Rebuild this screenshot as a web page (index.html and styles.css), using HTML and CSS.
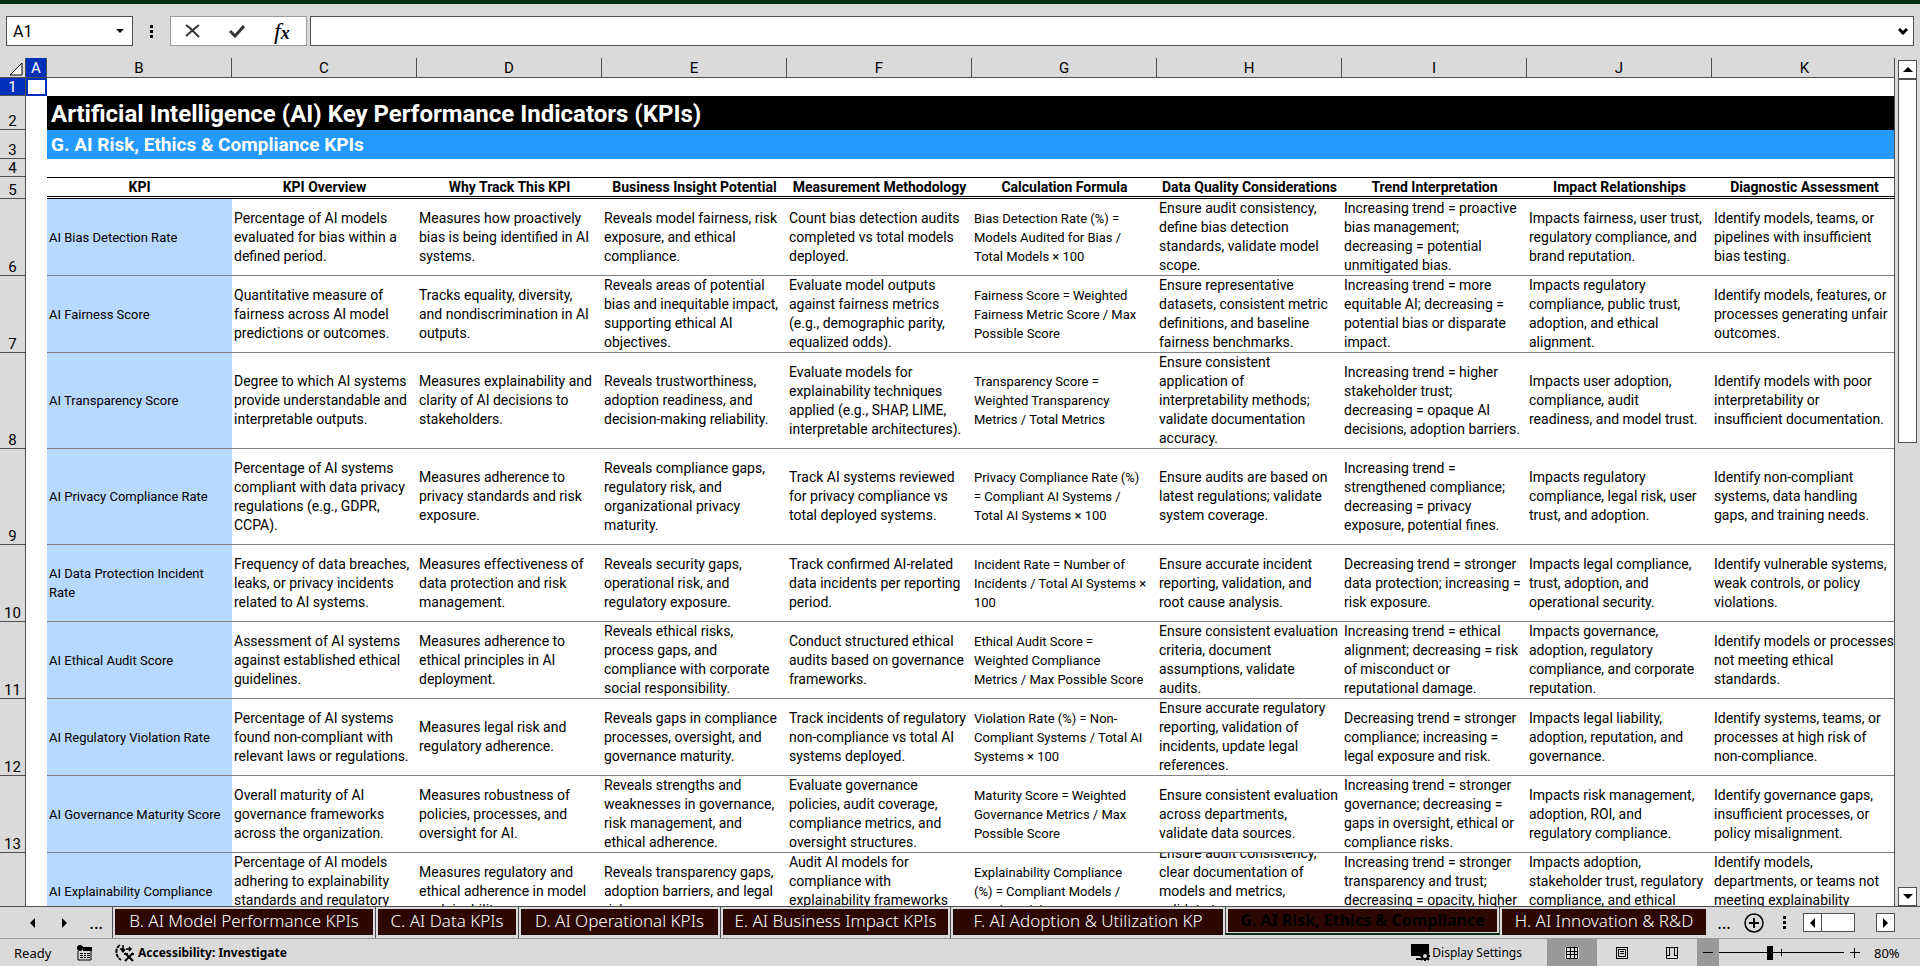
FILE: index.html
```html
<!DOCTYPE html>
<html lang="en">
<head>
    <meta charset="UTF-8">
    <meta name="viewport" content="width=device-width, initial-scale=1.0">
    <title>AI KPIs - Excel</title>
    <link rel="stylesheet" href="styles.css">
</head>
<body>

<header class="formula-bar">
    <div class="name-box">
        <input type="text" value="A1" aria-label="Name box">
        <button type="button" aria-label="Open name list">
            <svg width="8" height="4" viewBox="0 0 8 4"><path d="M0 0h8L4 4z"/></svg>
        </button>
    </div>
    <svg class="grip" width="3" height="13" viewBox="0 0 3 13"><path d="M0 0h3v3H0zM0 5h3v3H0zM0 10h3v3H0z"/></svg>
    <div class="formula-buttons">
        <button type="button" aria-label="Cancel">
            <svg width="16" height="14" viewBox="0 0 16 14" fill="none" stroke="#333" stroke-width="2"><path d="M1 1l4 3 9 9M14 1L9 5 1 12"/></svg>
        </button>
        <button type="button" aria-label="Enter">
            <svg width="16" height="13" viewBox="0 0 16 13" fill="none" stroke="#333" stroke-width="3"><path d="M1 6l5 5 9-10"/></svg>
        </button>
        <button type="button" class="fx" aria-label="Insert function"><i>f</i><i class="x">x</i></button>
    </div>
    <div class="formula-input">
        <input type="text" aria-label="Formula">
        <button type="button" aria-label="Expand formula bar">
            <svg width="10" height="7" viewBox="0 0 10 7" fill="none" stroke="#000" stroke-width="3"><path d="M1 1l4 4 4-4"/></svg>
        </button>
    </div>
</header>

<main class="workspace">
    <div class="sheet">
        <table class="grid">
            <colgroup>
                <col class="col-num"><col class="col-a"><col><col><col><col><col><col><col><col><col><col>
            </colgroup>
            <thead>
                <tr>
                    <th class="corner"><svg width="14" height="14" viewBox="0 0 14 14"><path d="M13 1v12H1z" fill="#fff" stroke="#000"/></svg></th>
                    <th class="selected">A</th>
                    <th>B</th><th>C</th><th>D</th><th>E</th><th>F</th><th>G</th><th>H</th><th>I</th><th>J</th><th>K</th>
                </tr>
            </thead>
            <tbody>
                <tr class="short">
                    <th class="selected">1</th>
                    <td class="active-cell"></td>
                    <td colspan="10"></td>
                </tr>
                <tr class="title-row">
                    <th>2</th>
                    <td></td>
                    <td colspan="10" class="title">Artificial Intelligence (AI) Key Performance Indicators (KPIs)</td>
                </tr>
                <tr class="subtitle-row">
                    <th>3</th>
                    <td></td>
                    <td colspan="10" class="subtitle">G. AI Risk, Ethics &amp; Compliance KPIs</td>
                </tr>
                <tr class="short">
                    <th>4</th>
                    <td></td>
                    <td colspan="10"></td>
                </tr>
                <tr class="heading-row">
                    <th>5</th>
                    <td></td>
                    <td>KPI</td>
                    <td>KPI Overview</td>
                    <td>Why Track This KPI</td>
                    <td>Business Insight Potential</td>
                    <td>Measurement Methodology</td>
                    <td>Calculation Formula</td>
                    <td>Data Quality Considerations</td>
                    <td>Trend Interpretation</td>
                    <td>Impact Relationships</td>
                    <td>Diagnostic Assessment</td>
                </tr>
                <tr class="kpi">
                    <th>6</th>
                    <td></td>
                    <td>AI Bias Detection Rate</td>
                    <td>Percentage of AI models<br>evaluated for bias within a<br>defined period.</td>
                    <td>Measures how proactively<br>bias is being identified in AI<br>systems.</td>
                    <td>Reveals model fairness, risk<br>exposure, and ethical<br>compliance.</td>
                    <td>Count bias detection audits<br>completed vs total models<br>deployed.</td>
                    <td>Bias Detection Rate (%) =<br>Models Audited for Bias /<br>Total Models × 100</td>
                    <td>Ensure audit consistency,<br>define bias detection<br>standards, validate model<br>scope.</td>
                    <td>Increasing trend = proactive<br>bias management;<br>decreasing = potential<br>unmitigated bias.</td>
                    <td>Impacts fairness, user trust,<br>regulatory compliance, and<br>brand reputation.</td>
                    <td>Identify models, teams, or<br>pipelines with insufficient<br>bias testing.</td>
                </tr>
                <tr class="kpi">
                    <th>7</th>
                    <td></td>
                    <td>AI Fairness Score</td>
                    <td>Quantitative measure of<br>fairness across AI model<br>predictions or outcomes.</td>
                    <td>Tracks equality, diversity,<br>and nondiscrimination in AI<br>outputs.</td>
                    <td>Reveals areas of potential<br>bias and inequitable impact,<br>supporting ethical AI<br>objectives.</td>
                    <td>Evaluate model outputs<br>against fairness metrics<br>(e.g., demographic parity,<br>equalized odds).</td>
                    <td>Fairness Score = Weighted<br>Fairness Metric Score / Max<br>Possible Score</td>
                    <td>Ensure representative<br>datasets, consistent metric<br>definitions, and baseline<br>fairness benchmarks.</td>
                    <td>Increasing trend = more<br>equitable AI; decreasing =<br>potential bias or disparate<br>impact.</td>
                    <td>Impacts regulatory<br>compliance, public trust,<br>adoption, and ethical<br>alignment.</td>
                    <td>Identify models, features, or<br>processes generating unfair<br>outcomes.</td>
                </tr>
                <tr class="kpi tall">
                    <th>8</th>
                    <td></td>
                    <td>AI Transparency Score</td>
                    <td>Degree to which AI systems<br>provide understandable and<br>interpretable outputs.</td>
                    <td>Measures explainability and<br>clarity of AI decisions to<br>stakeholders.</td>
                    <td>Reveals trustworthiness,<br>adoption readiness, and<br>decision-making reliability.</td>
                    <td>Evaluate models for<br>explainability techniques<br>applied (e.g., SHAP, LIME,<br>interpretable architectures).</td>
                    <td>Transparency Score =<br>Weighted Transparency<br>Metrics / Total Metrics</td>
                    <td>Ensure consistent<br>application of<br>interpretability methods;<br>validate documentation<br>accuracy.</td>
                    <td>Increasing trend = higher<br>stakeholder trust;<br>decreasing = opaque AI<br>decisions, adoption barriers.</td>
                    <td>Impacts user adoption,<br>compliance, audit<br>readiness, and model trust.</td>
                    <td>Identify models with poor<br>interpretability or<br>insufficient documentation.</td>
                </tr>
                <tr class="kpi tall">
                    <th>9</th>
                    <td></td>
                    <td>AI Privacy Compliance Rate</td>
                    <td>Percentage of AI systems<br>compliant with data privacy<br>regulations (e.g., GDPR,<br>CCPA).</td>
                    <td>Measures adherence to<br>privacy standards and risk<br>exposure.</td>
                    <td>Reveals compliance gaps,<br>regulatory risk, and<br>organizational privacy<br>maturity.</td>
                    <td>Track AI systems reviewed<br>for privacy compliance vs<br>total deployed systems.</td>
                    <td>Privacy Compliance Rate (%)<br>= Compliant AI Systems /<br>Total AI Systems × 100</td>
                    <td>Ensure audits are based on<br>latest regulations; validate<br>system coverage.</td>
                    <td>Increasing trend =<br>strengthened compliance;<br>decreasing = privacy<br>exposure, potential fines.</td>
                    <td>Impacts regulatory<br>compliance, legal risk, user<br>trust, and adoption.</td>
                    <td>Identify non-compliant<br>systems, data handling<br>gaps, and training needs.</td>
                </tr>
                <tr class="kpi">
                    <th>10</th>
                    <td></td>
                    <td>AI Data Protection Incident<br>Rate</td>
                    <td>Frequency of data breaches,<br>leaks, or privacy incidents<br>related to AI systems.</td>
                    <td>Measures effectiveness of<br>data protection and risk<br>management.</td>
                    <td>Reveals security gaps,<br>operational risk, and<br>regulatory exposure.</td>
                    <td>Track confirmed AI-related<br>data incidents per reporting<br>period.</td>
                    <td>Incident Rate = Number of<br>Incidents / Total AI Systems ×<br>100</td>
                    <td>Ensure accurate incident<br>reporting, validation, and<br>root cause analysis.</td>
                    <td>Decreasing trend = stronger<br>data protection; increasing =<br>risk exposure.</td>
                    <td>Impacts legal compliance,<br>trust, adoption, and<br>operational security.</td>
                    <td>Identify vulnerable systems,<br>weak controls, or policy<br>violations.</td>
                </tr>
                <tr class="kpi">
                    <th>11</th>
                    <td></td>
                    <td>AI Ethical Audit Score</td>
                    <td>Assessment of AI systems<br>against established ethical<br>guidelines.</td>
                    <td>Measures adherence to<br>ethical principles in AI<br>deployment.</td>
                    <td>Reveals ethical risks,<br>process gaps, and<br>compliance with corporate<br>social responsibility.</td>
                    <td>Conduct structured ethical<br>audits based on governance<br>frameworks.</td>
                    <td>Ethical Audit Score =<br>Weighted Compliance<br>Metrics / Max Possible Score</td>
                    <td>Ensure consistent evaluation<br>criteria, document<br>assumptions, validate<br>audits.</td>
                    <td>Increasing trend = ethical<br>alignment; decreasing = risk<br>of misconduct or<br>reputational damage.</td>
                    <td>Impacts governance,<br>adoption, regulatory<br>compliance, and corporate<br>reputation.</td>
                    <td>Identify models or processes<br>not meeting ethical<br>standards.</td>
                </tr>
                <tr class="kpi">
                    <th>12</th>
                    <td></td>
                    <td>AI Regulatory Violation Rate</td>
                    <td>Percentage of AI systems<br>found non-compliant with<br>relevant laws or regulations.</td>
                    <td>Measures legal risk and<br>regulatory adherence.</td>
                    <td>Reveals gaps in compliance<br>processes, oversight, and<br>governance maturity.</td>
                    <td>Track incidents of regulatory<br>non-compliance vs total AI<br>systems deployed.</td>
                    <td>Violation Rate (%) = Non-<br>Compliant Systems / Total AI<br>Systems × 100</td>
                    <td>Ensure accurate regulatory<br>reporting, validation of<br>incidents, update legal<br>references.</td>
                    <td>Decreasing trend = stronger<br>compliance; increasing =<br>legal exposure and risk.</td>
                    <td>Impacts legal liability,<br>adoption, reputation, and<br>governance.</td>
                    <td>Identify systems, teams, or<br>processes at high risk of<br>non-compliance.</td>
                </tr>
                <tr class="kpi">
                    <th>13</th>
                    <td></td>
                    <td>AI Governance Maturity Score</td>
                    <td>Overall maturity of AI<br>governance frameworks<br>across the organization.</td>
                    <td>Measures robustness of<br>policies, processes, and<br>oversight for AI.</td>
                    <td>Reveals strengths and<br>weaknesses in governance,<br>risk management, and<br>ethical adherence.</td>
                    <td>Evaluate governance<br>policies, audit coverage,<br>compliance metrics, and<br>oversight structures.</td>
                    <td>Maturity Score = Weighted<br>Governance Metrics / Max<br>Possible Score</td>
                    <td>Ensure consistent evaluation<br>across departments,<br>validate data sources.</td>
                    <td>Increasing trend = stronger<br>governance; decreasing =<br>gaps in oversight, ethical or<br>compliance risks.</td>
                    <td>Impacts risk management,<br>adoption, ROI, and<br>regulatory compliance.</td>
                    <td>Identify governance gaps,<br>insufficient processes, or<br>policy misalignment.</td>
                </tr>
                <tr class="kpi">
                    <th></th>
                    <td></td>
                    <td>AI Explainability Compliance</td>
                    <td>Percentage of AI models<br>adhering to explainability<br>standards and regulatory<br>guidelines.</td>
                    <td>Measures regulatory and<br>ethical adherence in model<br>explainability.</td>
                    <td>Reveals transparency gaps,<br>adoption barriers, and legal<br>risks.</td>
                    <td>Audit AI models for<br>compliance with<br>explainability frameworks<br>and rules.</td>
                    <td>Explainability Compliance<br>(%) = Compliant Models /<br>Total Models × 100</td>
                    <td><div class="clip">Ensure audit consistency,<br>clear documentation of<br>models and metrics,<br>validate transparency<br>tools.</div></td>
                    <td>Increasing trend = stronger<br>transparency and trust;<br>decreasing = opacity, higher<br>risk.</td>
                    <td>Impacts adoption,<br>stakeholder trust, regulatory<br>compliance, and ethical<br>standards.</td>
                    <td>Identify models,<br>departments, or teams not<br>meeting explainability<br>standards.</td>
                </tr>
            </tbody>
        </table>
    </div>
    <div class="v-scroll">
        <button type="button" aria-label="Scroll up"><svg width="10" height="5" viewBox="0 0 10 5"><path d="M5 0l5 5H0z"/></svg></button>
        <div class="v-thumb"></div>
        <button type="button" class="down" aria-label="Scroll down"><svg width="10" height="5" viewBox="0 0 10 5"><path d="M0 0h10L5 5z"/></svg></button>
    </div>
</main>

<nav class="tabs">
    <div class="tab-nav">
        <button type="button" aria-label="Previous sheet"><svg width="5" height="10" viewBox="0 0 5 10"><path d="M5 0v10L0 5z"/></svg></button>
        <button type="button" aria-label="Next sheet"><svg width="5" height="10" viewBox="0 0 5 10"><path d="M0 0v10l5-5z"/></svg></button>
        <button type="button" class="dots" aria-label="More sheets">...</button>
    </div>
    <div class="tab w-b"><a href="#">B. AI Model Performance KPIs</a></div>
    <div class="tab w-c"><a href="#">C. AI Data KPIs</a></div>
    <div class="tab w-d"><a href="#">D. AI Operational KPIs</a></div>
    <div class="tab w-e"><a href="#">E. AI Business Impact KPIs</a></div>
    <div class="tab w-f"><a href="#">F. AI Adoption &amp; Utilization KP</a></div>
    <div class="tab current w-g"><a href="#">G. AI Risk, Ethics &amp; Compliance</a></div>
    <div class="tab last w-h"><a href="#">H. AI Innovation &amp; R&amp;D</a></div>
    <button type="button" class="dots" aria-label="More sheets">...</button>
    <button type="button" class="add" aria-label="New sheet">
        <svg width="20" height="20" viewBox="0 0 20 20" fill="none" stroke="#000"><circle cx="10" cy="10" r="9" stroke-width="1.5"/><path d="M5 10h10M10 5v10" stroke-width="2"/></svg>
    </button>
    <svg class="tab-grip" width="3" height="13" viewBox="0 0 3 13"><path d="M0 0h3v3H0zM0 5h3v3H0zM0 10h3v3H0z"/></svg>
    <div class="h-scroll">
        <button type="button" aria-label="Scroll left"><svg width="5" height="10" viewBox="0 0 5 10"><path d="M5 0v10L0 5z"/></svg></button>
        <div class="h-thumb"></div>
        <button type="button" class="right" aria-label="Scroll right"><svg width="5" height="10" viewBox="0 0 5 10"><path d="M0 0v10l5-5z"/></svg></button>
    </div>
</nav>

<footer class="status">
    <span class="ready">Ready</span>
    <svg class="macro" width="16" height="16" viewBox="0 0 16 16"><path d="M1 6v9h13V3H7" fill="none" stroke="#000"/><circle cx="3" cy="3" r="3"/><path d="M6 2h9v4H6zM3 8h3v1H3zM7 8h2v1H7zM10 8h3v1h-3zM3 10h3v1H3zM7 10h2v1H7zM10 10h3v1h-3zM3 12h3v1H3zM7 12h2v1H7zM10 12h3v1h-3z"/></svg>
    <button type="button" class="access">
        <svg width="20" height="18" viewBox="0 0 20 18" fill="none" stroke="#000"><path d="M5 1C0 4 0 12 6 16" stroke-width="2" stroke-dasharray="4 1"/><path d="M5 5h4M8 1v6M6 5l2 3 2-3M11 5h5M14 3l2 2-2 2" stroke-width="1.5"/><path d="M10 9l8 8M18 9l-8 8M9 10h4M16 10h3" stroke-width="2"/></svg>
        Accessibility: Investigate
    </button>
    <button type="button" class="display">
        <svg width="20" height="19" viewBox="0 0 20 19"><path d="M0 1h18v8h-3l-2 1-3 3H0zM5 15h5v2H5z"/><circle cx="14" cy="13" r="3" fill="#dadada" stroke="#000" stroke-width="2"/><path d="M14 8v2M14 16v2M9 13h2M17 13h2M10 9l2 2M18 9l-2 2M10 17l2-2M18 17l-2-2" stroke="#000" stroke-width="2"/></svg>
        Display Settings
    </button>
    <div class="views">
        <button type="button" class="on" aria-label="Normal view"><svg width="14" height="12" viewBox="0 0 14 12"><path d="M0 0h14v12H0z" fill="#dadada"/><path d="M1.5.5h11v11h-11zM1 4.500h12M1 7.500h12M5.500 1v10M9.500 1v10" fill="none" stroke="#000"/></svg></button>
        <button type="button" aria-label="Page layout view"><svg width="12" height="12" viewBox="0 0 12 12" fill="none" stroke="#000"><path d="M0 .5h12M0 11.5h12M.5 0v12M11.500 0v12M2.500 2.500h7v7h-7zM4 4.500h4M4 6.500h4"/></svg></button>
        <button type="button" aria-label="Page break preview"><svg width="12" height="12" viewBox="0 0 12 12" fill="none" stroke="#000"><path d="M.5 0v11.5h11V0M0 .5h12M3.500 0v8M8.500 0v8M0 8.500h4M8 8.500h4"/></svg></button>
    </div>
    <div class="zoom">
        <button type="button" class="minus" aria-label="Zoom out"><svg width="10" height="10" viewBox="0 0 10 10" stroke="#000"><path d="M0 4.500h10"/></svg></button>
        <div class="slider"><input type="range" min="10" max="205" value="88" aria-label="Zoom"></div>
        <button type="button" class="plus" aria-label="Zoom in"><svg width="10" height="10" viewBox="0 0 10 10" stroke="#000"><path d="M0 4.500h10M4.500 0v10"/></svg></button>
        <span>80%</span>
    </div>
</footer>

</body>
</html>
```
FILE: styles.css
```css
* {
    box-sizing: border-box;
}
body {
    margin: 0;
    height: 100vh;
    display: flex;
    flex-direction: column;
    overflow: hidden;
    background-color: #dadada;
    border-top: 4px solid #052e12;
    font-family: Roboto, Arial, sans-serif;
    font-size: 14px;
    color: black;
}
button {
    display: flex;
    align-items: center;
    justify-content: center;
    margin: 0;
    padding: 0;
    border: none;
    background: none;
    font: inherit;
    color: inherit;
}
input {
    min-width: 0;
    border: none;
    outline: none;
    padding: 0;
    background: none;
}

/* Formula bar */
.formula-bar {
    display: flex;
    align-items: center;
    padding: 12px 6px;
    height: 54px;
}
.name-box {
    display: flex;
    width: 127px;
    height: 30px;
    background-color: white;
    border: 1px solid #505050;
}
.name-box input {
    flex: 1;
    padding-left: 6px;
    font-family: Roboto, Arial, sans-serif;
    font-size: 16px;
}
.name-box button {
    width: 24px;
}
.grip {
    margin: 0 17px;
}
.formula-buttons {
    display: flex;
    width: 137px;
    height: 30px;
    padding-right: 2px;
    background-color: white;
    border: 1px solid #999;
}
.formula-buttons button {
    flex: 1;
}
.formula-buttons .fx {
    font-family: "Liberation Serif", serif;
    font-size: 24px;
    line-height: 22px;
}
.fx .x {
    font-size: 18px;
    font-weight: bold;
    padding-top: 4px;
}
.formula-input {
    flex: 1;
    display: flex;
    height: 30px;
    margin-left: 3px;
    background-color: white;
    border: 1px solid #505050;
}
.formula-input input {
    flex: 1;
}
.formula-input button {
    width: 20px;
}

/* Sheet */
.workspace {
    flex: 1;
    min-height: 0;
    display: flex;
    border-bottom: 1px solid #505050;
}
.sheet {
    flex: 1;
    overflow: hidden;
    border-right: 1px solid #505050;
    background-color: white;
}
/* last column runs a little past the edge of the sheet */
.grid {
    width: calc(100% + 3px);
    table-layout: fixed;
    border-collapse: separate;
    border-spacing: 0;
}
.col-num {
    width: 26px;
}
.col-a {
    width: 21px;
}
.grid th {
    padding: 0;
    font-size: 15px;
    line-height: 15px;
    font-weight: normal;
    background-color: #dadada;
    border-right: 1px solid #505050;
    border-bottom: 1px solid #505050;
}
.grid thead th {
    height: 20px;
    padding-top: 2px;
}
.grid thead th:last-child {
    border-right: none;
}
.grid tbody th {
    vertical-align: bottom;
}
.grid .corner {
    text-align: right;
    padding-right: 2px;
}
.corner svg {
    display: block;
    margin-left: auto;
}
.grid .selected {
    background-color: #0030b9;
    color: white;
}
.grid td {
    padding: 0 0 0 2px;
    line-height: 19px;
    white-space: nowrap;
}
.short {
    height: 18px;
}
.grid .active-cell {
    border: 2px solid #0030b9;
    padding: 0;
}
.title-row {
    height: 34px;
}
.subtitle-row {
    height: 29px;
}
.grid .title {
    background-color: black;
    color: white;
    font-size: 24px;
    font-weight: bold;
    line-height: 32px;
    padding-top: 2px;
    padding-left: 4px;
}
.grid .subtitle {
    background-color: #2499ff;
    color: white;
    font-size: 19px;
    font-weight: bold;
    line-height: 28px;
    padding-left: 4px;
}
.heading-row {
    height: 22px;
}
.heading-row td {
    text-align: center;
    font-weight: bold;
    border-top: 1px solid black;
    border-bottom: 3px double black;
}
.grid .heading-row td {
    padding: 0;
    line-height: 18px;
}
.grid .heading-row td:nth-child(2) {
    border: none;
}
.kpi {
    height: 77px;
}
.tall {
    height: 96px;
}
.kpi td:nth-child(n + 3) {
    border-bottom: 1px solid #808080;
}
.kpi td:nth-child(3) {
    background-color: #b8d9ff;
}
.kpi td:nth-child(3),
.kpi td:nth-child(8) {
    font-size: 13px;
}
.clip {
    display: flex;
    align-items: center;
    height: 76px;
    overflow: hidden;
}

/* Scrollbars */
.v-scroll {
    width: 25px;
    padding: 2px 3px 0 3px;
    display: flex;
    flex-direction: column;
}
.v-scroll button,
.h-scroll button {
    width: 19px;
    height: 19px;
    flex-shrink: 0;
    background-color: white;
    border: 1px solid #505050;
}
.v-thumb {
    width: 19px;
    height: 43%;
    background-color: white;
    border: 1px solid #505050;
}
.v-scroll .down {
    margin-top: auto;
}

/* Sheet tabs */
.tabs {
    display: flex;
    height: 31px;
    font-family: "Noto Sans", sans-serif;
    font-size: 17px;
    white-space: nowrap;
}
.tab-nav {
    display: flex;
    flex-shrink: 0;
    width: 112px;
    padding-left: 17px;
}
.tab-nav button {
    width: 32px;
}
.dots {
    width: 32px;
}
.tab {
    flex-shrink: 0;
    padding: 2px 2px 3px 2px;
    border-left: 1px solid #505050;
}
.tab a {
    display: flex;
    align-items: center;
    justify-content: center;
    height: 26px;
    line-height: 24px;
    padding-bottom: 2px;
    background-color: #2d0802;
    color: white;
    text-decoration: none;
    font-weight: 300;
}
.w-b {
    width: 263px;
}
.w-c {
    width: 143px;
}
.w-d {
    width: 202px;
}
.w-e {
    width: 230px;
}
.w-f {
    width: 275px;
}
.w-g {
    width: 275px;
}
.w-h {
    width: 208px;
}
.current {
    height: 28px;
    border-right: 1px solid #505050;
    border-bottom: 2px solid #052e12;
}
.tab.current a {
    height: 23px;
    padding-bottom: 0;
    color: black;
    font-size: 16px;
    line-height: 23px;
    font-weight: bold;
}
.tab.last {
    border-left: none;
}
.add {
    width: 24px;
    margin-left: 2px;
}
.tab-grip {
    margin: 9px 16px 0 17px;
}
.h-scroll {
    display: flex;
    width: 92px;
    margin: 6px 25px 0 auto;
}
.h-thumb {
    width: 33px;
    height: 19px;
    background-color: white;
    border: 1px solid #505050;
    border-left: none;
}
.h-scroll .right {
    margin-left: auto;
}

/* Status bar */
.status {
    display: flex;
    align-items: center;
    height: 28px;
    border-top: 1px solid #999;
    font-family: "Noto Sans", sans-serif;
    font-size: 13px;
}
.ready {
    width: 77px;
    padding-left: 14px;
}
.access {
    margin-left: 22px;
    gap: 3px;
    font-size: 12px;
    font-weight: bold;
}
.display {
    margin-left: auto;
    margin-right: 25px;
    gap: 1px;
    font-size: 12px;
}
.views {
    display: flex;
    height: 27px;
}
.views button {
    width: 50px;
}
.views .on {
    background-color: #999;
}
.zoom {
    display: flex;
    align-items: center;
    height: 27px;
}
.zoom .minus {
    width: 22px;
    height: 27px;
    background-color: #999;
}
.slider {
    display: flex;
    width: 125px;
    height: 27px;
    background: linear-gradient(black, black) 62px 10px / 1px 7px no-repeat;
}
.slider input {
    appearance: none;
    width: 100%;
    margin: 0;
    background: linear-gradient(black, black) 0 13px / 100% 1px no-repeat;
}
.slider input::-webkit-slider-thumb {
    appearance: none;
    width: 6px;
    height: 14px;
    background-color: black;
}
.zoom .plus {
    width: 22px;
}
.zoom span {
    width: 54px;
    padding-left: 8px;
}
```
